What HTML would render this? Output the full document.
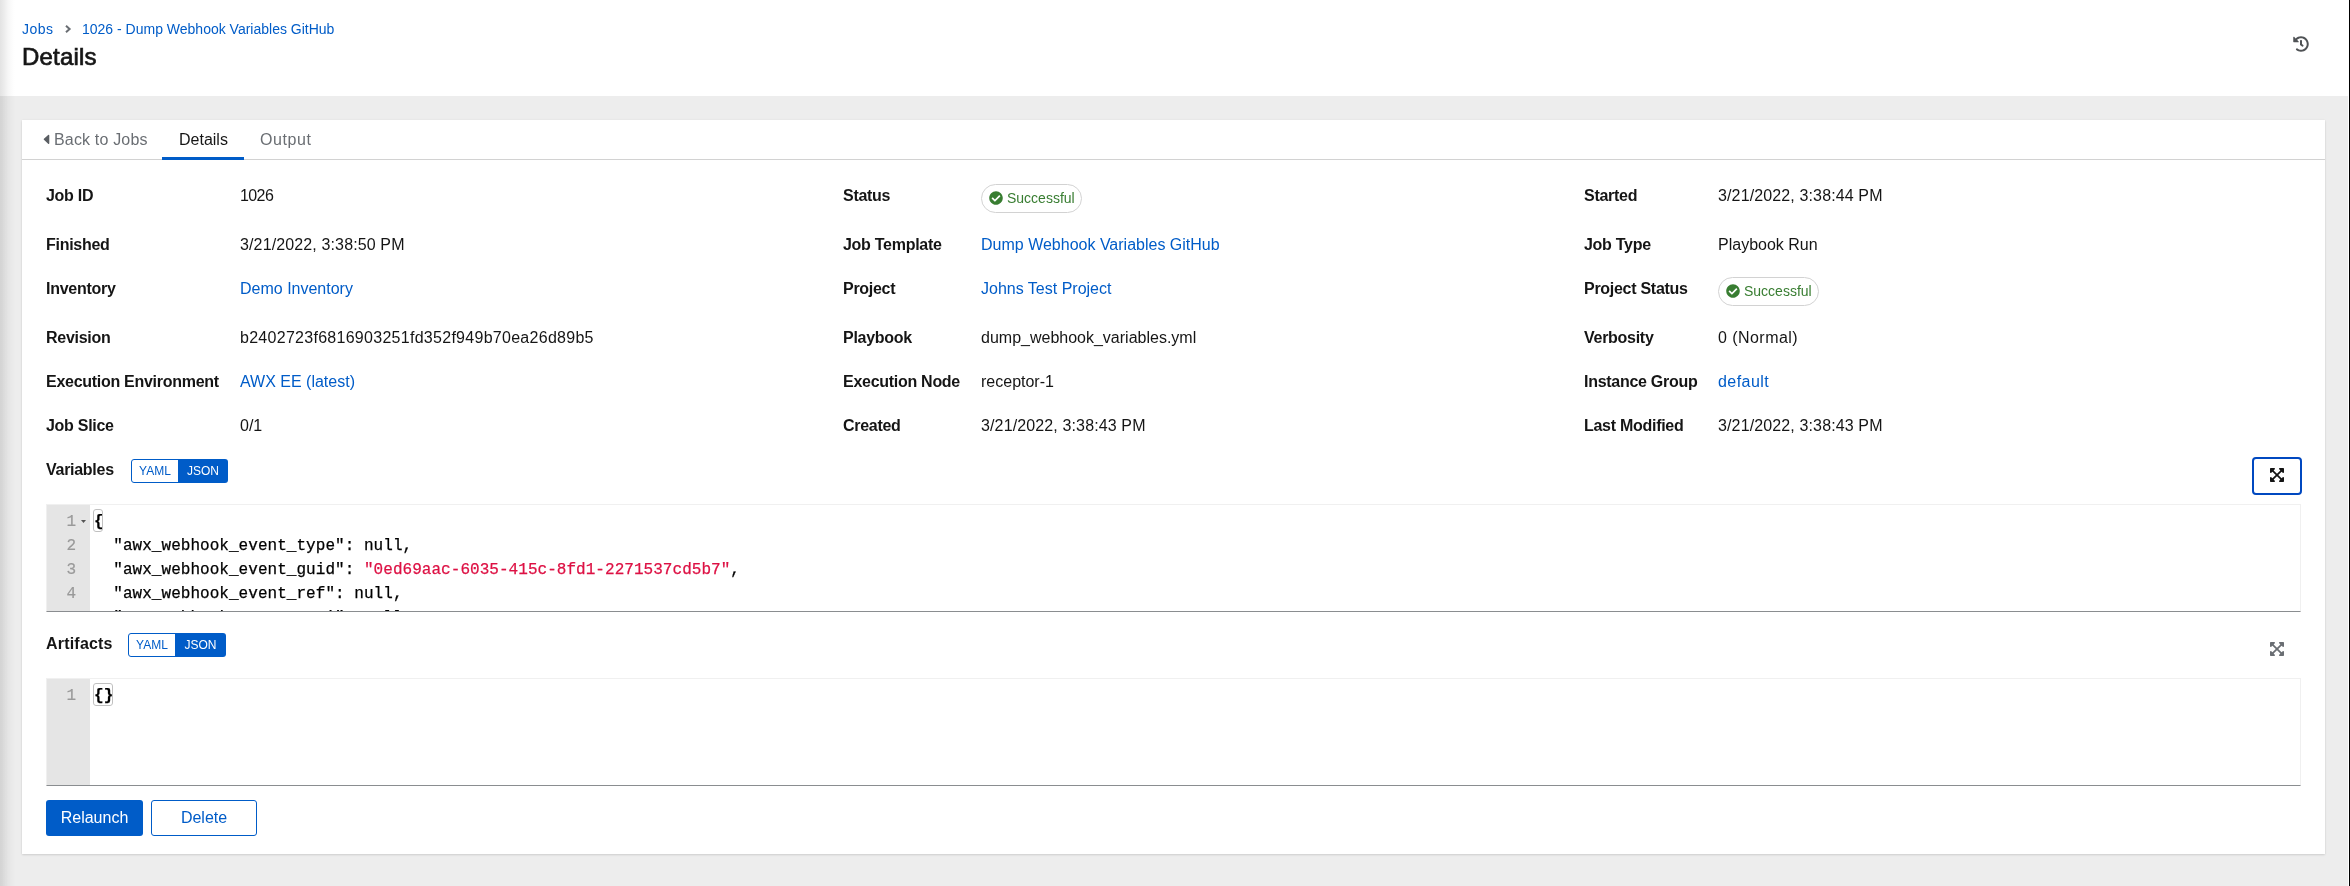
<!DOCTYPE html>
<html>
<head>
<meta charset="utf-8">
<style>
*{box-sizing:border-box;margin:0;padding:0}
html,body{width:2350px;height:886px;overflow:hidden}
body{position:relative;background:#ededed;font-family:"Liberation Sans",sans-serif;color:#151515;font-size:16px;line-height:24px}
.a{position:absolute;white-space:nowrap}
#hdr{position:absolute;left:0;top:0;width:2348px;height:96px;background:#fff}
#sideshadow{position:absolute;left:0;top:0;width:16px;height:886px;background:linear-gradient(to right,rgba(3,3,3,.11) 0px,rgba(3,3,3,.095) 2px,rgba(3,3,3,.07) 4.5px,rgba(3,3,3,.035) 8px,rgba(3,3,3,.01) 12px,rgba(3,3,3,0) 15px)}
#edgew{position:absolute;left:2348px;top:0;width:1px;height:886px;background:#fff}
#edgeb{position:absolute;left:2349px;top:0;width:1px;height:886px;background:#000}
.link{color:#005cc8}
.bc{font-size:14px;line-height:21px}
#card{position:absolute;left:22px;top:120px;width:2303px;height:734px;background:#fff;box-shadow:0 1px 2px 0 rgba(3,3,3,.12),0 0 2px 0 rgba(3,3,3,.06)}
#tabline{position:absolute;left:0;top:39px;width:2303px;height:1px;background:#d2d2d2}
#tabbar{position:absolute;left:140px;top:37px;width:82px;height:3px;background:#005cc8}
.tab{position:absolute;top:0;height:40px;line-height:40px;font-size:16px;color:#6a6e73}
.lbl{font-weight:bold;letter-spacing:-0.28px}
.badge{position:absolute;height:29px;border:1px solid #d2d2d2;border-radius:30em;padding:0 8px;font-size:14px;line-height:27px;color:#387d31}
.badge svg{position:absolute;left:7px;top:6px}
.toggle{position:absolute;height:24px}
.toggle .y{position:absolute;left:0;top:0;height:24px;border:1px solid #005cc8;border-radius:3px 0 0 3px;color:#005cc8;font-size:12px;line-height:22px;text-align:center}
.toggle .j{position:absolute;top:0;height:24px;background:#005cc8;border-radius:0 3px 3px 0;color:#fff;font-size:12px;line-height:24px;text-align:center}
.editor{position:absolute;left:24px;width:2255px;height:108px;border:1px solid #f0f0f0;border-bottom-color:#8a8d90;background:#fff;overflow:hidden}
.gutter{position:absolute;left:0;top:0;width:43px;height:106px;background:#e5e5e5}
.code{font-family:"Liberation Mono",monospace;font-size:16px;line-height:24px}
.ln{position:absolute;left:0;width:29px;text-align:right;color:#999;-webkit-text-stroke:0.2px}
.cl{position:absolute;left:47px;color:#000;white-space:pre;letter-spacing:0.04px;-webkit-text-stroke:0.25px}
.str{color:#dd1144}
.btn{position:absolute;top:680px;height:36px;border-radius:3px;font-size:16px;line-height:36px;text-align:center}
</style>
</head>
<body><div id="root" style="position:absolute;left:0;top:0;width:2350px;height:886px;will-change:transform">
<div id="hdr"></div>

<!-- breadcrumb -->
<div class="a bc link" style="left:22px;top:19px;letter-spacing:0.5px">Jobs</div>
<svg class="a" style="left:64px;top:24px" width="8" height="10" viewBox="0 0 8 10"><path d="M2 1.8 L5.6 5 L2 8.2" fill="none" stroke="#6a6e73" stroke-width="2"/></svg>
<div class="a bc link" style="left:82px;top:19px">1026 - Dump Webhook Variables GitHub</div>
<div class="a" style="left:22px;top:42px;font-size:24px;line-height:30px;color:#151515;-webkit-text-stroke:0.7px #151515;letter-spacing:0.2px">Details</div>
<svg class="a" style="left:2293px;top:36px" width="16" height="16" viewBox="0 0 512 512"><path fill="#4f5255" d="M504 255.531c.253 136.64-111.18 248.372-247.82 248.468-59.015.042-113.223-20.53-155.822-54.911-11.077-8.94-11.905-25.541-1.839-35.607l11.267-11.267c8.609-8.609 22.353-9.551 31.891-1.984C173.062 425.135 212.781 440 256 440c101.705 0 184-82.311 184-184 0-101.705-82.311-184-184-184-48.814 0-93.149 18.969-126.068 49.932l50.754 50.754c10.08 10.08 2.941 27.314-11.313 27.314H24c-8.837 0-16-7.163-16-16V38.627c0-14.254 17.234-21.393 27.314-11.314l49.372 49.372C129.209 34.136 189.552 8 256 8c136.81 0 247.747 110.78 248 247.531zm-180.912 78.784l9.823-12.63c8.138-10.463 6.253-25.542-4.21-33.679L288 256.349V152c0-13.255-10.745-24-24-24h-16c-13.255 0-24 10.745-24 24v135.651l65.409 50.874c10.463 8.137 25.541 6.253 33.679-4.21z"/></svg>

<div id="card"></div>
<div class="a" style="left:22px;top:159px;width:2303px;height:1px;background:#d2d2d2"></div>
<div class="a" style="left:162px;top:157px;width:82px;height:3px;background:#005cc8"></div>
<svg class="a" style="left:43px;top:134px" width="7" height="11" viewBox="0 0 7 11"><path d="M5.6 1.4 L1.4 5.3 L5.6 9.2 Z" fill="#5a5e63" stroke="#5a5e63" stroke-width="1.4" stroke-linejoin="round"/></svg>
<div class="a" style="left:54px;top:128px;color:#6a6e73;letter-spacing:0.17px">Back to Jobs</div>
<div class="a" style="left:179px;top:128px;color:#151515">Details</div>
<div class="a" style="left:260px;top:128px;color:#6a6e73;letter-spacing:0.6px">Output</div>

<!-- details rows -->
<div class="a lbl" style="left:46px;top:184px">Job ID</div>
<div class="a" style="left:240px;top:184px;letter-spacing:-0.6px">1026</div>
<div class="a lbl" style="left:843px;top:184px">Status</div>
<div class="badge" style="left:981px;top:184px;width:101px"><svg width="14" height="14" viewBox="0 0 512 512"><path fill="#387d31" d="M504 256c0 136.967-111.033 248-248 248S8 392.967 8 256 119.033 8 256 8s248 111.033 248 248zM227.314 387.314l184-184c6.248-6.248 6.248-16.379 0-22.627l-22.627-22.627c-6.248-6.249-16.379-6.249-22.628 0L216 308.118l-70.059-70.059c-6.248-6.248-16.379-6.248-22.628 0l-22.627 22.627c-6.248 6.248-6.248 16.379 0 22.627l104 104c6.249 6.249 16.379 6.249 22.628.001z"/></svg><span style="position:absolute;left:25px;top:0">Successful</span></div>
<div class="a lbl" style="left:1584px;top:184px">Started</div>
<div class="a" style="left:1718px;top:184px;letter-spacing:0.13px">3/21/2022, 3:38:44 PM</div>

<div class="a lbl" style="left:46px;top:233px">Finished</div>
<div class="a" style="left:240px;top:233px;letter-spacing:0.13px">3/21/2022, 3:38:50 PM</div>
<div class="a lbl" style="left:843px;top:233px">Job Template</div>
<div class="a link" style="left:981px;top:233px">Dump Webhook Variables GitHub</div>
<div class="a lbl" style="left:1584px;top:233px">Job Type</div>
<div class="a" style="left:1718px;top:233px">Playbook Run</div>

<div class="a lbl" style="left:46px;top:277px">Inventory</div>
<div class="a link" style="left:240px;top:277px">Demo Inventory</div>
<div class="a lbl" style="left:843px;top:277px">Project</div>
<div class="a link" style="left:981px;top:277px">Johns Test Project</div>
<div class="a lbl" style="left:1584px;top:277px">Project Status</div>
<div class="badge" style="left:1718px;top:277px;width:101px"><svg width="14" height="14" viewBox="0 0 512 512"><path fill="#387d31" d="M504 256c0 136.967-111.033 248-248 248S8 392.967 8 256 119.033 8 256 8s248 111.033 248 248zM227.314 387.314l184-184c6.248-6.248 6.248-16.379 0-22.627l-22.627-22.627c-6.248-6.249-16.379-6.249-22.628 0L216 308.118l-70.059-70.059c-6.248-6.248-16.379-6.248-22.628 0l-22.627 22.627c-6.248 6.248-6.248 16.379 0 22.627l104 104c6.249 6.249 16.379 6.249 22.628.001z"/></svg><span style="position:absolute;left:25px;top:0">Successful</span></div>

<div class="a lbl" style="left:46px;top:326px">Revision</div>
<div class="a" style="left:240px;top:326px;letter-spacing:0.28px">b2402723f6816903251fd352f949b70ea26d89b5</div>
<div class="a lbl" style="left:843px;top:326px">Playbook</div>
<div class="a" style="left:981px;top:326px">dump_webhook_variables.yml</div>
<div class="a lbl" style="left:1584px;top:326px">Verbosity</div>
<div class="a" style="left:1718px;top:326px;letter-spacing:0.45px">0 (Normal)</div>

<div class="a lbl" style="left:46px;top:370px">Execution Environment</div>
<div class="a link" style="left:240px;top:370px">AWX EE (latest)</div>
<div class="a lbl" style="left:843px;top:370px">Execution Node</div>
<div class="a" style="left:981px;top:370px">receptor-1</div>
<div class="a lbl" style="left:1584px;top:370px">Instance Group</div>
<div class="a link" style="left:1718px;top:370px;letter-spacing:0.45px">default</div>

<div class="a lbl" style="left:46px;top:414px">Job Slice</div>
<div class="a" style="left:240px;top:414px">0/1</div>
<div class="a lbl" style="left:843px;top:414px">Created</div>
<div class="a" style="left:981px;top:414px;letter-spacing:0.13px">3/21/2022, 3:38:43 PM</div>
<div class="a lbl" style="left:1584px;top:414px">Last Modified</div>
<div class="a" style="left:1718px;top:414px;letter-spacing:0.13px">3/21/2022, 3:38:43 PM</div>

<!-- Variables -->
<div class="a lbl" style="left:46px;top:458px">Variables</div>
<div class="toggle" style="left:131px;top:459px;width:97px">
  <div class="y" style="width:48px">YAML</div>
  <div class="j" style="left:47px;width:50px">JSON</div>
</div>
<div class="a" style="left:2252px;top:457px;width:50px;height:38px;border:2px solid #0048c0;border-radius:4px"></div>
<svg class="a" style="left:2270px;top:467px" width="14" height="16" viewBox="0 0 448 512"><path fill="#151515" d="M448 344v112a23.94 23.94 0 0 1-24 24H312c-21.39 0-32.090-25.9-17-41l36.2-36.2L224 295.6 116.77 402.9 153 439c15.09 15.1 4.39 41-17 41H24a23.94 23.94 0 0 1-24-24V344c0-21.4 25.89-32.1 41-17l36.19 36.2L184.46 256 77.18 148.7 41 185c-15.1 15.1-41 4.4-41-17V56a23.94 23.94 0 0 1 24-24h112c21.39 0 32.09 25.9 17 41l-36.2 36.2L224 216.4l107.23-107.3L295 73c-15.09-15.1-4.39-41 17-41h112a23.94 23.94 0 0 1 24 24v112c0 21.4-25.89 32.1-41 17l-36.19-36.2L263.54 256l107.28 107.3L407 327.1c15.1-15.2 41-4.5 41 16.9z"/></svg>
<div class="editor code" style="left:46px;top:504px">
  <div class="gutter"></div>
  <div class="ln" style="top:5px">1</div>
  <svg class="a" style="left:34px;top:15px" width="6" height="4" viewBox="0 0 6 4"><path d="M0 0H5L2.5 3Z" fill="#555"/></svg>
  <div class="cl" style="top:5px"><span style="font-weight:bold">{</span></div>
  <div class="a" style="left:46px;top:4px;width:10px;height:23px;border:1px solid #c0c0c0;border-radius:3px"></div>
  <div class="ln" style="top:29px">2</div>
  <div class="cl" style="top:29px">  "awx_webhook_event_type": null,</div>
  <div class="ln" style="top:53px">3</div>
  <div class="cl" style="top:53px">  "awx_webhook_event_guid": <span class="str">"0ed69aac-6035-415c-8fd1-2271537cd5b7"</span>,</div>
  <div class="ln" style="top:77px">4</div>
  <div class="cl" style="top:77px">  "awx_webhook_event_ref": null,</div>
  <div class="ln" style="top:101px">5</div>
  <div class="cl" style="top:101px">  "awx_webhook_status_api": null,</div>
</div>

<!-- Artifacts -->
<div class="a lbl" style="left:46px;top:632px;letter-spacing:0.2px">Artifacts</div>
<div class="toggle" style="left:128px;top:633px;width:98px">
  <div class="y" style="width:48px">YAML</div>
  <div class="j" style="left:47px;width:51px">JSON</div>
</div>
<svg class="a" style="left:2270px;top:641px" width="14" height="16" viewBox="0 0 448 512"><path fill="#6a6e73" d="M448 344v112a23.94 23.94 0 0 1-24 24H312c-21.39 0-32.090-25.9-17-41l36.2-36.2L224 295.6 116.77 402.9 153 439c15.09 15.1 4.39 41-17 41H24a23.94 23.94 0 0 1-24-24V344c0-21.4 25.89-32.1 41-17l36.19 36.2L184.46 256 77.18 148.7 41 185c-15.1 15.1-41 4.4-41-17V56a23.94 23.94 0 0 1 24-24h112c21.39 0 32.09 25.9 17 41l-36.2 36.2L224 216.4l107.23-107.3L295 73c-15.09-15.1-4.39-41 17-41h112a23.94 23.94 0 0 1 24 24v112c0 21.4-25.89 32.1-41 17l-36.19-36.2L263.54 256l107.28 107.3L407 327.1c15.1-15.2 41-4.5 41 16.9z"/></svg>
<div class="editor code" style="left:46px;top:678px">
  <div class="gutter"></div>
  <div class="ln" style="top:5px">1</div>
  <div class="cl" style="top:5px"><span style="font-weight:bold">{}</span></div>
  <div class="a" style="left:46px;top:4px;width:20px;height:23px;border:1px solid #c0c0c0;border-radius:3px"></div>
</div>

<!-- buttons -->
<div class="a" style="left:46px;top:800px;width:97px;height:36px;background:#005cc8;border-radius:3px;color:#fff;text-align:center;line-height:36px">Relaunch</div>
<div class="a" style="left:151px;top:800px;width:106px;height:36px;border:1px solid #005cc8;border-radius:3px;color:#005cc8;text-align:center;line-height:34px">Delete</div>

<div id="sideshadow"></div>
<div id="edgew"></div>
<div id="edgeb"></div>
</div></body>
</html>
